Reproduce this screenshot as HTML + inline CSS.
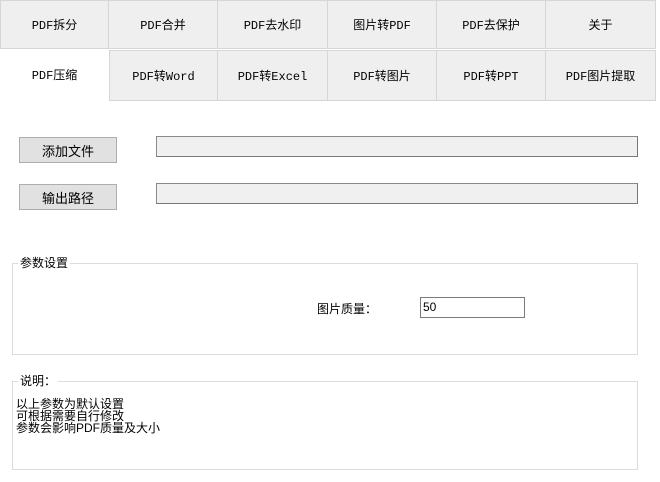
<!DOCTYPE html>
<html><head><meta charset="utf-8"><style>
*{margin:0;padding:0;box-sizing:border-box}
body{width:660px;height:482px;background:#fff;position:relative;overflow:hidden;font-family:"Liberation Mono","Noto Sans CJK SC",monospace;font-size:12px;color:#000}
.t{position:absolute;background:#efefef;border:1px solid #d6d6d6;display:flex;align-items:center;justify-content:center;font-size:12px}
.sel{background:#fff;border:none}
.btn{position:absolute;left:19px;width:98px;height:26px;background:#e1e1e1;border:1px solid #adadad;display:flex;align-items:center;justify-content:center;font-family:"Liberation Sans","Noto Sans CJK SC",sans-serif;font-size:13px}
.tb{position:absolute;left:156px;width:482px;height:21px;background:#f0f0f0;border:1px solid #8a8a8a;border-right-color:#777;border-bottom-color:#777}
.g{position:absolute;left:12px;width:626px;border:1px solid #dcdcdc}
.lg{position:absolute;background:#fff;padding:0 2px;font-family:"Liberation Sans","Noto Sans CJK SC",sans-serif;font-size:12px;line-height:14px}
.ss{font-family:"Liberation Sans","Noto Sans CJK SC",sans-serif}
</style></head><body>
<div class="t" style="left:0;top:0;width:109px;height:49px">PDF拆分</div>
<div class="t" style="left:108px;top:0;width:110px;height:49px">PDF合并</div>
<div class="t" style="left:217px;top:0;width:111px;height:49px">PDF去水印</div>
<div class="t" style="left:327px;top:0;width:110px;height:49px">图片转PDF</div>
<div class="t" style="left:436px;top:0;width:110px;height:49px">PDF去保护</div>
<div class="t" style="left:545px;top:0;width:111px;height:49px">关于</div>
<div class="t sel" style="left:0;top:49px;width:109px;height:51px">PDF压缩</div>
<div class="t" style="left:109px;top:50px;width:109px;height:51px">PDF转Word</div>
<div class="t" style="left:217px;top:50px;width:111px;height:51px">PDF转Excel</div>
<div class="t" style="left:327px;top:50px;width:110px;height:51px">PDF转图片</div>
<div class="t" style="left:436px;top:50px;width:110px;height:51px">PDF转PPT</div>
<div class="t" style="left:545px;top:50px;width:111px;height:51px">PDF图片提取</div>

<div class="btn" style="top:137px">添加文件</div>
<div class="tb" style="top:136px"></div>
<div class="btn" style="top:184px">输出路径</div>
<div class="tb" style="top:183px"></div>

<div class="g" style="top:263px;height:92px"></div>
<div class="lg" style="left:18px;top:256px">参数设置</div>
<div class="ss" style="position:absolute;left:317px;top:300px;font-size:12px">图片质量：</div>
<div style="position:absolute;left:420px;top:297px;width:105px;height:21px;border:1px solid #7a7a7a;background:#fff;font-family:'Liberation Sans',sans-serif;font-size:12px;padding:2px 0 0 2px">50</div>

<div class="g" style="top:381px;height:89px"></div>
<div class="lg" style="left:18px;top:374px">说明：</div>
<div class="ss" style="position:absolute;left:16px;top:398px;font-size:12px;line-height:12px">以上参数为默认设置<br>可根据需要自行修改<br>参数会影响PDF质量及大小</div>
</body></html>
